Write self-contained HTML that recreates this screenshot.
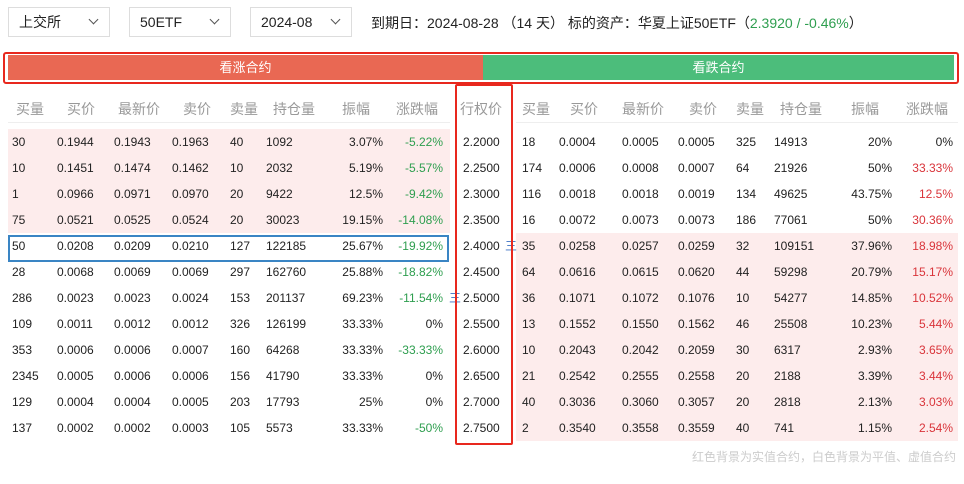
<!DOCTYPE html>
<html><head><meta charset="utf-8"><style>
*{margin:0;padding:0;box-sizing:border-box}
body{width:964px;height:484px;background:#fff;font-family:"Liberation Sans","Noto Sans CJK SC",sans-serif;font-size:12px;color:#222;position:relative;overflow:hidden}
.dd{position:absolute;top:7px;height:30px;border:1px solid #ddd;font-size:14px;line-height:28px;padding-left:10px}
.dd i{position:absolute;right:12px;top:8px;width:7px;height:7px;border-right:1.3px solid #555;border-bottom:1.3px solid #555;transform:rotate(45deg)}
.info{position:absolute;left:371px;top:13px;font-size:14px}
.g{color:#2e9e4f}.r{color:#d9343a}
.hb{position:absolute;left:3px;top:52px;width:956px;height:32px;border:2px solid #e8281e;border-radius:3px}
.hr{position:absolute;left:8px;top:55px;width:475px;height:25px;background:#e96853;color:#fff;text-align:center;line-height:25px;font-size:13px}
.hg{position:absolute;left:483px;top:55px;width:471px;height:25px;background:#4cbd7b;color:#fff;text-align:center;line-height:25px;font-size:13px}
.th{position:absolute;top:99px;font-size:14px;color:#999}
.line{position:absolute;top:122px;height:1px;background:#eee}
.row{position:absolute;left:0;width:964px;height:26px;line-height:26px}
.row span{position:absolute}
.pl{position:absolute;left:8px;width:442px;height:26px;background:#fdecec}
.pr{position:absolute;left:516px;width:442px;height:26px;background:#fdecec}
.ra{text-align:right}
.sk{position:absolute;left:455px;top:84px;width:58px;height:361px;border:2px solid #e8281e;border-radius:2px}
.sel{position:absolute;left:8px;top:235px;width:441px;height:27px;border:2px solid #3a85c4}
.foot{position:absolute;right:8px;top:448px;font-size:12px;color:#ccc}
.eq{color:#3a6fc4}
</style></head><body>
<div class="dd" style="left:8px;width:102px">上交所<i></i></div>
<div class="dd" style="left:129px;width:102px">50ETF<i></i></div>
<div class="dd" style="left:250px;width:102px">2024-08<i></i></div>
<div class="info">到期日：2024-08-28 （14 天） 标的资产：华夏上证50ETF（<span class="g">2.3920 / -0.46%</span>）</div>
<div class="hb"></div>
<div class="hr">看涨合约</div><div class="hg">看跌合约</div>
<div class="th" style="left:16px">买量</div><div class="th" style="left:67px">买价</div><div class="th" style="left:118px">最新价</div><div class="th" style="left:183px">卖价</div><div class="th" style="left:230px">卖量</div><div class="th" style="left:273px">持仓量</div><div class="th" style="left:342px">振幅</div><div class="th" style="left:396px">涨跌幅</div>
<div class="th" style="left:460px">行权价</div>
<div class="th" style="left:522px">买量</div><div class="th" style="left:570px">买价</div><div class="th" style="left:622px">最新价</div><div class="th" style="left:689px">卖价</div><div class="th" style="left:736px">卖量</div><div class="th" style="left:780px">持仓量</div><div class="th" style="left:851px">振幅</div><div class="th" style="left:906px">涨跌幅</div>
<div class="line" style="left:8px;width:442px"></div><div class="line" style="left:516px;width:442px"></div>

<div class="pl" style="top:129px"></div><div class="pl" style="top:155px"></div><div class="pl" style="top:181px"></div><div class="pl" style="top:207px"></div>
<div class="pr" style="top:233px"></div><div class="pr" style="top:259px"></div><div class="pr" style="top:285px"></div><div class="pr" style="top:311px"></div><div class="pr" style="top:337px"></div><div class="pr" style="top:363px"></div><div class="pr" style="top:389px"></div><div class="pr" style="top:415px"></div>

<div class="row" style="top:129px"><span style="left:12px">30</span><span style="left:57px">0.1944</span><span style="left:114px">0.1943</span><span style="left:172px">0.1963</span><span style="left:230px">40</span><span style="left:266px">1092</span><span class="ra" style="right:581px">3.07%</span><span class="ra g" style="right:521px">-5.22%</span><span style="left:463px">2.2000</span><span style="left:522px">18</span><span style="left:559px">0.0004</span><span style="left:622px">0.0005</span><span style="left:678px">0.0005</span><span style="left:736px">325</span><span style="left:774px">14913</span><span class="ra" style="right:72px">20%</span><span class="ra" style="right:11px">0%</span></div>
<div class="row" style="top:155px"><span style="left:12px">10</span><span style="left:57px">0.1451</span><span style="left:114px">0.1474</span><span style="left:172px">0.1462</span><span style="left:230px">10</span><span style="left:266px">2032</span><span class="ra" style="right:581px">5.19%</span><span class="ra g" style="right:521px">-5.57%</span><span style="left:463px">2.2500</span><span style="left:522px">174</span><span style="left:559px">0.0006</span><span style="left:622px">0.0008</span><span style="left:678px">0.0007</span><span style="left:736px">64</span><span style="left:774px">21926</span><span class="ra" style="right:72px">50%</span><span class="ra r" style="right:11px">33.33%</span></div>
<div class="row" style="top:181px"><span style="left:12px">1</span><span style="left:57px">0.0966</span><span style="left:114px">0.0971</span><span style="left:172px">0.0970</span><span style="left:230px">20</span><span style="left:266px">9422</span><span class="ra" style="right:581px">12.5%</span><span class="ra g" style="right:521px">-9.42%</span><span style="left:463px">2.3000</span><span style="left:522px">116</span><span style="left:559px">0.0018</span><span style="left:622px">0.0018</span><span style="left:678px">0.0019</span><span style="left:736px">134</span><span style="left:774px">49625</span><span class="ra" style="right:72px">43.75%</span><span class="ra r" style="right:11px">12.5%</span></div>
<div class="row" style="top:207px"><span style="left:12px">75</span><span style="left:57px">0.0521</span><span style="left:114px">0.0525</span><span style="left:172px">0.0524</span><span style="left:230px">20</span><span style="left:266px">30023</span><span class="ra" style="right:581px">19.15%</span><span class="ra g" style="right:521px">-14.08%</span><span style="left:463px">2.3500</span><span style="left:522px">16</span><span style="left:559px">0.0072</span><span style="left:622px">0.0073</span><span style="left:678px">0.0073</span><span style="left:736px">186</span><span style="left:774px">77061</span><span class="ra" style="right:72px">50%</span><span class="ra r" style="right:11px">30.36%</span></div>
<div class="row" style="top:233px"><span style="left:12px">50</span><span style="left:57px">0.0208</span><span style="left:114px">0.0209</span><span style="left:172px">0.0210</span><span style="left:230px">127</span><span style="left:266px">122185</span><span class="ra" style="right:581px">25.67%</span><span class="ra g" style="right:521px">-19.92%</span><span style="left:463px">2.4000</span><span class="eq" style="left:505px">三</span><span style="left:522px">35</span><span style="left:559px">0.0258</span><span style="left:622px">0.0257</span><span style="left:678px">0.0259</span><span style="left:736px">32</span><span style="left:774px">109151</span><span class="ra" style="right:72px">37.96%</span><span class="ra r" style="right:11px">18.98%</span></div>
<div class="row" style="top:259px"><span style="left:12px">28</span><span style="left:57px">0.0068</span><span style="left:114px">0.0069</span><span style="left:172px">0.0069</span><span style="left:230px">297</span><span style="left:266px">162760</span><span class="ra" style="right:581px">25.88%</span><span class="ra g" style="right:521px">-18.82%</span><span style="left:463px">2.4500</span><span style="left:522px">64</span><span style="left:559px">0.0616</span><span style="left:622px">0.0615</span><span style="left:678px">0.0620</span><span style="left:736px">44</span><span style="left:774px">59298</span><span class="ra" style="right:72px">20.79%</span><span class="ra r" style="right:11px">15.17%</span></div>
<div class="row" style="top:285px"><span style="left:12px">286</span><span style="left:57px">0.0023</span><span style="left:114px">0.0023</span><span style="left:172px">0.0024</span><span style="left:230px">153</span><span style="left:266px">201137</span><span class="ra" style="right:581px">69.23%</span><span class="ra g" style="right:521px">-11.54%</span><span class="eq" style="left:449px">三</span><span style="left:463px">2.5000</span><span style="left:522px">36</span><span style="left:559px">0.1071</span><span style="left:622px">0.1072</span><span style="left:678px">0.1076</span><span style="left:736px">10</span><span style="left:774px">54277</span><span class="ra" style="right:72px">14.85%</span><span class="ra r" style="right:11px">10.52%</span></div>
<div class="row" style="top:311px"><span style="left:12px">109</span><span style="left:57px">0.0011</span><span style="left:114px">0.0012</span><span style="left:172px">0.0012</span><span style="left:230px">326</span><span style="left:266px">126199</span><span class="ra" style="right:581px">33.33%</span><span class="ra" style="right:521px">0%</span><span style="left:463px">2.5500</span><span style="left:522px">13</span><span style="left:559px">0.1552</span><span style="left:622px">0.1550</span><span style="left:678px">0.1562</span><span style="left:736px">46</span><span style="left:774px">25508</span><span class="ra" style="right:72px">10.23%</span><span class="ra r" style="right:11px">5.44%</span></div>
<div class="row" style="top:337px"><span style="left:12px">353</span><span style="left:57px">0.0006</span><span style="left:114px">0.0006</span><span style="left:172px">0.0007</span><span style="left:230px">160</span><span style="left:266px">64268</span><span class="ra" style="right:581px">33.33%</span><span class="ra g" style="right:521px">-33.33%</span><span style="left:463px">2.6000</span><span style="left:522px">10</span><span style="left:559px">0.2043</span><span style="left:622px">0.2042</span><span style="left:678px">0.2059</span><span style="left:736px">30</span><span style="left:774px">6317</span><span class="ra" style="right:72px">2.93%</span><span class="ra r" style="right:11px">3.65%</span></div>
<div class="row" style="top:363px"><span style="left:12px">2345</span><span style="left:57px">0.0005</span><span style="left:114px">0.0006</span><span style="left:172px">0.0006</span><span style="left:230px">156</span><span style="left:266px">41790</span><span class="ra" style="right:581px">33.33%</span><span class="ra" style="right:521px">0%</span><span style="left:463px">2.6500</span><span style="left:522px">21</span><span style="left:559px">0.2542</span><span style="left:622px">0.2555</span><span style="left:678px">0.2558</span><span style="left:736px">20</span><span style="left:774px">2188</span><span class="ra" style="right:72px">3.39%</span><span class="ra r" style="right:11px">3.44%</span></div>
<div class="row" style="top:389px"><span style="left:12px">129</span><span style="left:57px">0.0004</span><span style="left:114px">0.0004</span><span style="left:172px">0.0005</span><span style="left:230px">203</span><span style="left:266px">17793</span><span class="ra" style="right:581px">25%</span><span class="ra" style="right:521px">0%</span><span style="left:463px">2.7000</span><span style="left:522px">40</span><span style="left:559px">0.3036</span><span style="left:622px">0.3060</span><span style="left:678px">0.3057</span><span style="left:736px">20</span><span style="left:774px">2818</span><span class="ra" style="right:72px">2.13%</span><span class="ra r" style="right:11px">3.03%</span></div>
<div class="row" style="top:415px"><span style="left:12px">137</span><span style="left:57px">0.0002</span><span style="left:114px">0.0002</span><span style="left:172px">0.0003</span><span style="left:230px">105</span><span style="left:266px">5573</span><span class="ra" style="right:581px">33.33%</span><span class="ra g" style="right:521px">-50%</span><span style="left:463px">2.7500</span><span style="left:522px">2</span><span style="left:559px">0.3540</span><span style="left:622px">0.3558</span><span style="left:678px">0.3559</span><span style="left:736px">40</span><span style="left:774px">741</span><span class="ra" style="right:72px">1.15%</span><span class="ra r" style="right:11px">2.54%</span></div>

<div class="sel"></div>
<div class="sk"></div>
<div class="foot">红色背景为实值合约，白色背景为平值、虚值合约</div>
</body></html>
